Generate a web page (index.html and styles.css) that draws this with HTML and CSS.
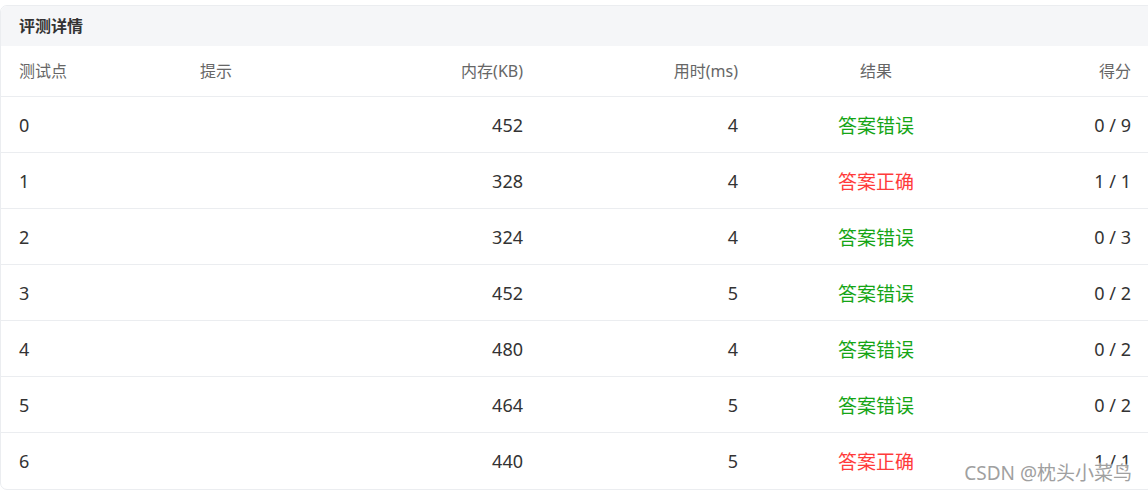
FILE: index.html
```html
<!DOCTYPE html>
<html lang="zh">
<head>
<meta charset="utf-8">
<link rel="stylesheet" href="styles.css">
</head>
<body>
<div class="card">
  <div class="card-title">评测详情</div>
  <div class="row head">
    <div>测试点</div>
    <div>提示</div>
    <div class="r">内存(KB)</div>
    <div class="r">用时(ms)</div>
    <div class="c">结果</div>
    <div class="r">得分</div>
  </div>
  <div class="row"><div>0</div><div></div><div class="r">452</div><div class="r">4</div><div class="c wa">答案错误</div><div class="r">0 / 9</div></div>
  <div class="row"><div>1</div><div></div><div class="r">328</div><div class="r">4</div><div class="c ac">答案正确</div><div class="r">1 / 1</div></div>
  <div class="row"><div>2</div><div></div><div class="r">324</div><div class="r">4</div><div class="c wa">答案错误</div><div class="r">0 / 3</div></div>
  <div class="row"><div>3</div><div></div><div class="r">452</div><div class="r">5</div><div class="c wa">答案错误</div><div class="r">0 / 2</div></div>
  <div class="row"><div>4</div><div></div><div class="r">480</div><div class="r">4</div><div class="c wa">答案错误</div><div class="r">0 / 2</div></div>
  <div class="row"><div>5</div><div></div><div class="r">464</div><div class="r">5</div><div class="c wa">答案错误</div><div class="r">0 / 2</div></div>
  <div class="row last"><div>6</div><div></div><div class="r">440</div><div class="r">5</div><div class="c ac">答案正确</div><div class="r">1 / 1</div></div>
</div>
<div class="watermark">CSDN @枕头小菜鸟</div>
</body>
</html>
```
FILE: styles.css
```css
html, body {
  margin: 0;
  padding: 0;
  background: #fff;
  overflow: hidden;
}
body {
  font-family: "Noto Sans", "Noto Sans CJK SC", sans-serif;
  color: #333;
  position: relative;
  width: 1148px;
  height: 492px;
}
.card {
  margin-top: 5px;
  width: 1154px;
  border: 1px solid #ebedf0;
  border-radius: 7px;
  overflow: hidden;
  box-sizing: border-box;
}
.card-title {
  height: 40px;
  line-height: 40px;
  background: #f5f6f8;
  padding-left: 18px;
  font-size: 16px;
  font-weight: 700;
  color: #333;
}
.row {
  display: grid;
  grid-template-columns: 181px 200px 123px 215px 276px 117px;
  padding-left: 18px;
  height: 56px;
  align-items: center;
  border-bottom: 1px solid #ebedf0;
  box-sizing: border-box;
  font-size: 18px;
  color: #333;
}
.row.head {
  height: 51px;
  font-size: 16px;
  color: #666;
  padding-bottom: 2px;
}
.row.last {
  border-bottom: none;
}
.r { text-align: right; }
.c { text-align: center; }
.wa, .ac { font-size: 19px; }
.wa { color: #15a515; }
.ac { color: #ff3b3b; }
.watermark {
  position: absolute;
  right: 16px;
  top: 458px;
  font-size: 19px;
  color: #a0a0a0;
  text-shadow: 0 0 2px #fff, 0 0 2px #fff;
  font-family: "Noto Sans", "Noto Sans CJK SC", sans-serif;
}
```
